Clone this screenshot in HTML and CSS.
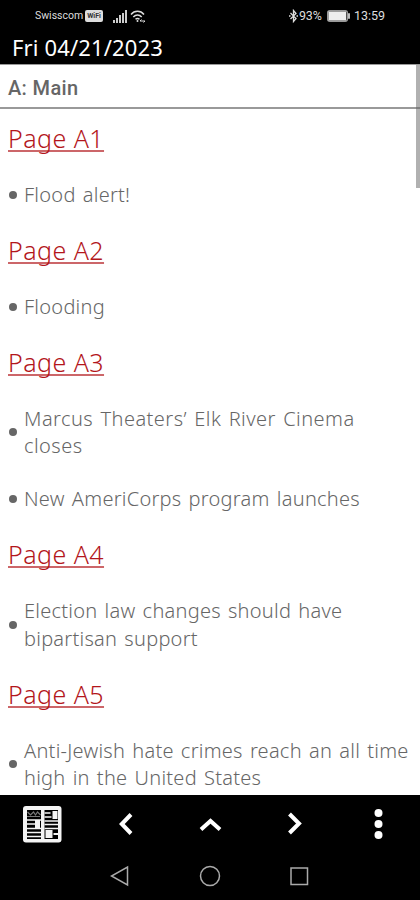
FILE: index.html
```
<!DOCTYPE html>
<html lang="en">
<head>
    <meta charset="UTF-8">
    <meta name="viewport" content="width=device-width, initial-scale=1.0">
    <title>Fri 04/21/2023</title>
    <link rel="stylesheet" href="styles.css">
</head>
<body>
    <div class="status-bar">
        <span class="carrier">Swisscom</span>
        <span class="wifi-call">WiFi</span>
        <svg class="signal" width="15" height="13" viewBox="0 0 15 13" fill="#ccc">
            <rect x="0" y="10" width="2" height="3"/>
            <rect x="3" y="8" width="2" height="5"/>
            <rect x="6" y="5" width="2" height="8"/>
            <rect x="9" y="3" width="2" height="10"/>
            <rect x="12" y="0" width="2" height="13"/>
        </svg>
        <svg class="wifi" width="16" height="13" viewBox="0 0 16 13" fill="none" stroke="#ddd" stroke-width="1.5">
            <path d="M1 4.5C4.500 0.300 10.500 0.300 14 4.500M3.300 7C5.800 4.300 9.200 4.300 11.700 7M5.500 9.300Q7.500 7.600 9.500 9.300"/>
            <circle cx="7.500" cy="11" r="1" fill="#ddd" stroke="none"/>
            <path d="M10 11h5M10 11l1.500-1.500M15 11l-1.500 1.500" stroke-width="1"/>
        </svg>
        <svg class="bluetooth" width="9" height="14" viewBox="0 0 9 14" fill="none" stroke="#ddd" stroke-width="1.300">
            <path d="M1.500 4l5.500 5.500L4.500 12.500V1.500L7 4.500L1.500 10"/>
            <path d="M0 7h1.500M7.500 7H9"/>
        </svg>
        <span class="percent">93%</span>
        <svg class="battery" width="23" height="12" viewBox="0 0 23 12">
            <rect x="0.750" y="0.750" width="19.500" height="10.500" rx="2" fill="none" stroke="#999" stroke-width="1.500"/>
            <rect x="1.500" y="1.500" width="17.500" height="9" fill="#eee"/>
            <rect x="21" y="3" width="2" height="6" rx="1" fill="#bbb"/>
        </svg>
        <span class="clock">13:59</span>
    </div>
    <div class="date">Fri 04/21/2023</div>
    <div class="section">A: Main</div>

    <div class="content">
        <h2><a>Page A1</a></h2>
        <div class="item"><span>Flood alert!</span></div>
        <h2><a>Page A2</a></h2>
        <div class="item"><span>Flooding</span></div>
        <h2><a>Page A3</a></h2>
        <div class="item loose"><span>Marcus Theaters’ Elk River Cinema<br>closes</span></div>
        <div class="item"><span>New AmeriCorps program launches</span></div>
        <h2><a>Page A4</a></h2>
        <div class="item"><span>Election law changes should have<br>bipartisan support</span></div>
        <h2><a>Page A5</a></h2>
        <div class="item"><span>Anti-Jewish hate crimes reach an all time<br>high in the United States</span></div>
    </div>
    <div class="scrollbar"></div>

    <div class="toolbar">
        <svg width="40" height="38" viewBox="0 0 40 38">
            <rect x="1" y="1" width="38.500" height="36.500" rx="3" fill="#f4f4f4"/>
            <path d="M5 5h14v29h-14zM22.500 5h13.500v29h-13.500z" fill="#000"/>
            <path d="M5.500 7l3 3 3-3 2 3 2-3 3 3M5 11.500h13" fill="none" stroke="#777" stroke-width="1.200"/>
            <path d="M5 15h14M5 19h8M5 23.500h14M5 27.500h14M5 31.500h14M22.500 8h6M22.500 12h7M22.500 16h13.500M22.500 19.500h13.500M22.500 23.500h13.500" stroke="#f4f4f4" stroke-width="1.700"/>
            <path d="M13 15h5v8h-5zM30.500 6h5v8h-5zM23.500 25h7v8h-7zM31.500 28h4.500v2h-4.500z" fill="#f4f4f4"/>
        </svg>
        <svg width="40" height="38" viewBox="0 0 40 38" fill="none" stroke="#fff" stroke-width="4">
            <path d="M25 9.500L15.800 19L25 28.500"/>
        </svg>
        <svg width="40" height="38" viewBox="0 0 40 38" fill="none" stroke="#fff" stroke-width="4">
            <path d="M11 24.500L20.500 16L30 24.500"/>
        </svg>
        <svg width="40" height="38" viewBox="0 0 40 38" fill="none" stroke="#fff" stroke-width="4">
            <path d="M15.500 9L25 18.500L15.500 28"/>
        </svg>
        <svg width="40" height="38" viewBox="0 0 40 38" fill="#fff">
            <circle cx="20.500" cy="8" r="4"/>
            <circle cx="20.500" cy="19" r="4"/>
            <circle cx="20.500" cy="30" r="4"/>
        </svg>
    </div>
    <div class="nav-bar">
        <svg width="22" height="22" viewBox="0 0 22 22"><path d="M17.500 2v18L1.500 11z"/></svg>
        <svg width="22" height="22" viewBox="0 0 22 22"><circle cx="11" cy="11" r="9.500"/></svg>
        <svg width="22" height="22" viewBox="0 0 22 22"><rect x="3" y="3" width="16.500" height="16.500"/></svg>
    </div>
</body>
</html>
```
FILE: styles.css
```
body {
    display: flex;
    flex-direction: column;
    width: 420px;
    height: 900px;
    margin: 0;
    overflow: hidden;
    background-color: #fff;
    font-family: "Noto Sans", sans-serif;
}

.status-bar {
    display: flex;
    align-items: center;
    height: 32px;
    padding: 0 34px 0 35px;
    background-color: #000;
    color: #ddd;
    font-family: Roboto, sans-serif;
    font-size: 12.5px;
    line-height: 32px;
}

.carrier {
    width: 50px;
    font-size: 10.5px;
}

.wifi-call {
    width: 18px;
    height: 12px;
    background-color: #ddd;
    border-radius: 2px;
    color: #333;
    font-size: 7px;
    font-weight: 700;
    line-height: 12px;
    text-align: center;
}

.signal {
    margin-left: 10px;
}

.wifi {
    margin-left: 2px;
}

.bluetooth {
    margin-left: auto;
}

.percent {
    width: 26px;
    margin-left: 1px;
    letter-spacing: -0.2px;
}

.battery {
    margin-left: 2px;
}

.clock {
    width: 32px;
    margin-left: 4px;
}

.date {
    height: 32px;
    padding-left: 12px;
    background-color: #000;
    color: #fff;
    font-size: 22px;
    letter-spacing: 0.15px;
    line-height: 30px;
}

.section {
    box-sizing: border-box;
    height: 45px;
    padding-left: 8px;
    border-top: 1px solid #999;
    border-bottom: 2px solid #999;
    color: #666;
    font-family: Roboto, sans-serif;
    font-size: 20px;
    font-weight: 500;
    letter-spacing: 0.35px;
    line-height: 46px;
}

.content {
    flex: 1;
    min-height: 0;
    padding: 13px 0 0 8px;
    overflow: hidden;
}

h2 {
    height: 33px;
    margin: 0 0 26px;
    color: #b3161b;
    font-size: 25px;
    font-weight: 300;
    letter-spacing: 0.45px;
    line-height: 33px;
}

h2 a {
    text-decoration: underline;
    text-decoration-color: #cc6669;
    text-decoration-thickness: 2px;
    text-underline-offset: 2px;
    text-decoration-skip-ink: none;
}

.item {
    display: flex;
    align-items: center;
    margin-bottom: 26px;
    color: #666;
    font-size: 20px;
    font-weight: 300;
    letter-spacing: 0.25px;
    word-spacing: 1.7px;
    line-height: 27.1px;
    white-space: nowrap;
}

.item.loose {
    letter-spacing: 0.45px;
}

.item::before {
    content: "";
    width: 8px;
    height: 8px;
    margin-right: 7px;
    margin-left: 1px;
    border-radius: 50%;
    background-color: #666;
}

.scrollbar {
    position: absolute;
    top: 65px;
    right: 0;
    width: 4px;
    height: 123px;
    background-color: rgba(100, 100, 100, 0.5);
}

.toolbar {
    display: flex;
    justify-content: space-between;
    align-items: center;
    height: 58px;
    padding: 0 22px;
    background-color: #000;
}

.nav-bar {
    display: flex;
    justify-content: center;
    gap: 67px;
    height: 45px;
    padding-bottom: 2px;
    align-items: center;
    background-color: #000;
}

.nav-bar svg {
    fill: none;
    stroke: #aaa;
    stroke-width: 1.5;
}
```
